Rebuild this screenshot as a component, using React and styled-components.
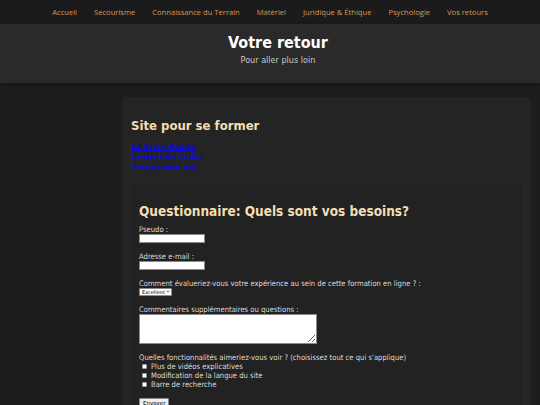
import styled, { createGlobalStyle } from "styled-components";

const GlobalStyle = createGlobalStyle`
  html, body {
    margin: 0;
    padding: 0;
    background: #1d1d1d;
  }
  body {
    font-family: "DejaVu Sans", Verdana, sans-serif;
    font-stretch: condensed;
    color: #dcdcdc;
  }
`;

const navItems = [
  "Accueil",
  "Secourisme",
  "Connaissance du Terrain",
  "Matériel",
  "Juridique & Éthique",
  "Psychologie",
  "Vos retours",
];

const links = ["La Croix Rouge", "Protection Civile", "Secourisme.net"];

const features = [
  "Plus de vidéos explicatives",
  "Modification de la langue du site",
  "Barre de recherche",
];

export default function App() {
  return (
    <>
      <GlobalStyle />
      <Nav>
        {navItems.map((item) => (
          <NavLink key={item} href="#">{item}</NavLink>
        ))}
      </Nav>
      <Header>
        <Title>Votre retour</Title>
        <Subtitle>Pour aller plus loin</Subtitle>
      </Header>
      <Main>
        <Sidebar />
        <Card>
          <CardTitle>Site pour se former</CardTitle>
          <LinkList>
            {links.map((l) => (
              <SiteLink key={l} href="#">{l}</SiteLink>
            ))}
          </LinkList>
          <Section>
            <SectionTitle>Questionnaire: Quels sont vos besoins?</SectionTitle>
            <Form onSubmit={(e) => e.preventDefault()}>
              <Field>
                <Label>Pseudo :</Label>
                <TextInput type="text" />
              </Field>
              <Field>
                <Label>Adresse e-mail :</Label>
                <TextInput type="email" />
              </Field>
              <Field>
                <Label>Comment évalueriez-vous votre expérience au sein de cette formation en ligne ? :</Label>
                <SelectWrap>
                  <Select defaultValue="excellent">
                    <option value="excellent">Excellent</option>
                    <option value="bien">Bien</option>
                    <option value="moyen">Moyen</option>
                  </Select>
                  <Chevron viewBox="0 0 6 4">
                    <path d="M0.8 0.8 L3 3 L5.2 0.8" fill="none" stroke="#222" strokeWidth="1.1" />
                  </Chevron>
                </SelectWrap>
              </Field>
              <Field>
                <Label>Commentaires supplémentaires ou questions :</Label>
                <TextArea />
              </Field>
              <Field>
                <Label>Quelles fonctionnalités aimeriez-vous voir ? (choisissez tout ce qui s'applique)</Label>
                {features.map((f) => (
                  <CheckRow key={f}>
                    <Check type="checkbox" />
                    {f}
                  </CheckRow>
                ))}
              </Field>
              <SubmitButton type="submit">Envoyer</SubmitButton>
            </Form>
          </Section>
        </Card>
      </Main>
    </>
  );
}

const Nav = styled.nav`
  display: flex;
  justify-content: center;
  align-items: center;
  gap: 17px;
  height: 24px;
  background: #1b1b1b;
`;

const NavLink = styled.a`
  font-family: "Open Sans", sans-serif;
  font-stretch: normal;
  font-size: 7.6px;
  color: #cf9a5e;
  text-decoration: none;
`;

const Header = styled.header`
  display: flex;
  flex-direction: column;
  align-items: center;
  height: 59px;
  background: #2a2a2a;
  box-shadow: 0 2px 4px rgba(0, 0, 0, 0.3);
  padding: 9px 0 0 16px;
  box-sizing: border-box;
`;

const Title = styled.h1`
  margin: 0;
  font-size: 16px;
  font-weight: bold;
  color: #ffffff;
  line-height: 20px;
`;

const Subtitle = styled.p`
  margin: 2px 0 0;
  font-size: 9px;
  line-height: 11px;
  color: #c8c8c8;
`;

const Main = styled.main`
  display: grid;
  grid-template-columns: 114px 1fr;
  gap: 8px;
  padding: 14px 9px 0 0;
`;

const Sidebar = styled.aside``;

const Card = styled.div`
  background: #242424;
  border-radius: 5px 5px 0 0;
  padding: 21px 7px 0 9px;
  min-height: 320px;
`;

const CardTitle = styled.h2`
  margin: 0 0 9px;
  font-size: 13px;
  line-height: 15px;
  font-weight: bold;
  color: #f5deb3;
`;

const LinkList = styled.div`
  display: flex;
  flex-direction: column;
  align-items: flex-start;
`;

const SiteLink = styled.a`
  font-stretch: normal;
  font-size: 7.6px;
  line-height: 10.5px;
  font-weight: bold;
  color: #0a0adc;
  text-decoration: underline;
`;

const Section = styled.section`
  margin-top: 7px;
  background: #222222;
  border: 1px solid #272727;
  border-radius: 4px 4px 0 0;
  padding: 21px 8px 10px 7px;
`;

const SectionTitle = styled.h3`
  margin: 0 0 6px;
  font-size: 13.5px;
  line-height: 16px;
  font-weight: bold;
  color: #f5deb3;
`;

const Form = styled.form`
  display: flex;
  flex-direction: column;
  align-items: flex-start;
  gap: 9px;
`;

const Field = styled.div`
  display: flex;
  flex-direction: column;
  align-items: flex-start;
`;

const Label = styled.label`
  font-size: 7.6px;
  line-height: 9px;
  color: #dcdcdc;
`;

const TextInput = styled.input`
  box-sizing: border-box;
  width: 66px;
  height: 9px;
  padding: 0;
  margin: 0;
  border: 1px solid #8a8a8a;
  background: #ffffff;
`;

const SelectWrap = styled.div`
  position: relative;
  width: 33px;
  height: 8px;
`;

const Select = styled.select`
  display: block;
  appearance: none;
  box-sizing: border-box;
  width: 33px;
  height: 8px;
  padding: 0 0 0 2px;
  margin: 0;
  font-family: inherit;
  font-size: 5px;
  line-height: 6px;
  border: 1px solid #8a8a8a;
  border-radius: 1px;
  background: #ffffff;
  color: #000;
`;

const Chevron = styled.svg`
  position: absolute;
  right: 2px;
  top: 2.5px;
  width: 4px;
  height: 3px;
  pointer-events: none;
`;

const TextArea = styled.textarea`
  box-sizing: border-box;
  width: 178px;
  height: 30px;
  margin: 0;
  border: 1px solid #8a8a8a;
  background: #ffffff;
`;

const CheckRow = styled.label`
  display: flex;
  align-items: center;
  gap: 4.5px;
  padding-left: 2.5px;
  font-size: 7.6px;
  line-height: 9.3px;
  color: #dcdcdc;
`;

const Check = styled.input`
  appearance: none;
  box-sizing: border-box;
  width: 5px;
  height: 5px;
  margin: 0;
  background: #ffffff;
  border: 1px solid #9a9a9a;
  border-radius: 1px;
`;

const SubmitButton = styled.button`
  margin-top: 0;
  font-family: inherit;
  font-size: 5.5px;
  line-height: 7px;
  padding: 1px 3px;
  background: #efefef;
  border: 1px solid #8a8a8a;
  border-radius: 1px;
  color: #000;
`;
